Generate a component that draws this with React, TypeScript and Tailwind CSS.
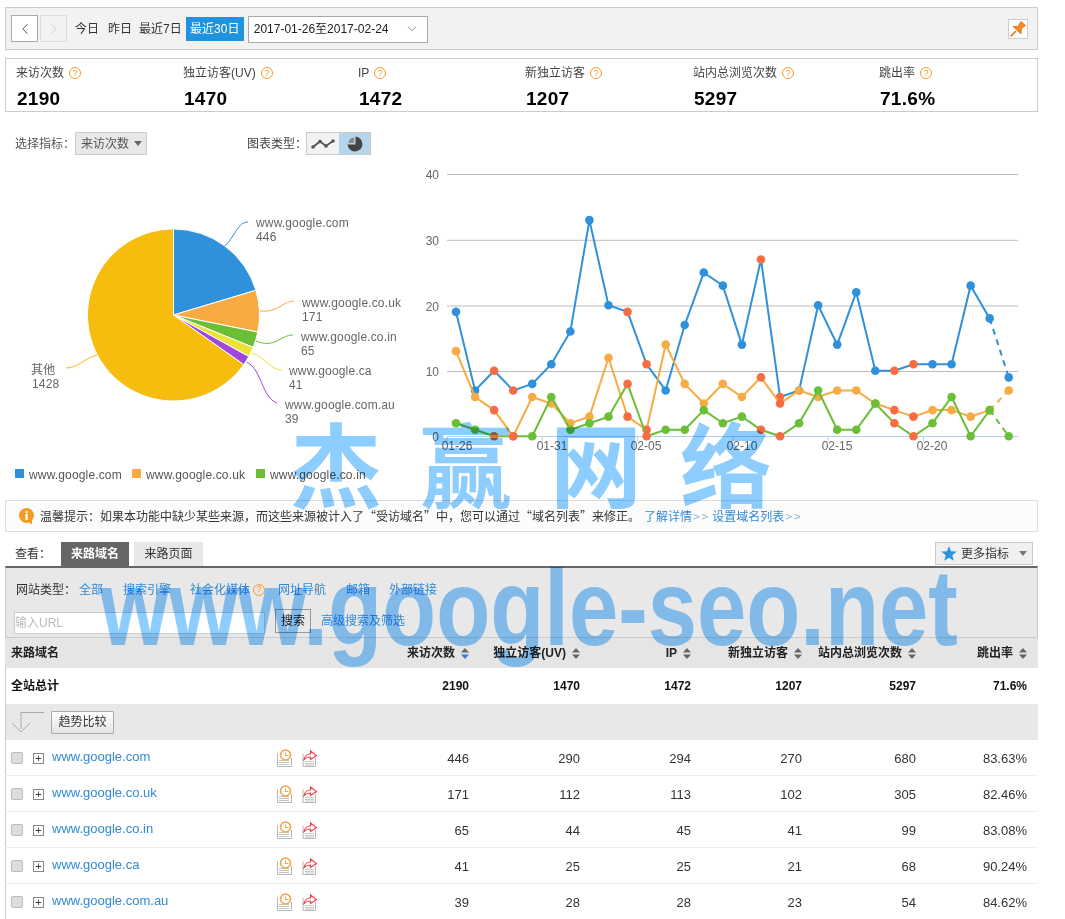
import React from "react";
import { ChevronLeft, ChevronRight, ChevronDown } from "lucide-react";

const Q = ({ small }: { small?: boolean }) => (
  <span className={`inline-flex items-center justify-center rounded-full border border-[#f59d2a] text-[#f59d2a] w-[12px] h-[12px] text-[9px] leading-none ${small ? "" : "ml-[5px]"}`}>?</span>
);

const stats = [
  { w: "w-[167px]", l: "来访次数", v: "2190" },
  { w: "w-[175px]", l: "独立访客(UV)", v: "1470" },
  { w: "w-[167px]", l: "IP", v: "1472" },
  { w: "w-[168px]", l: "新独立访客", v: "1207" },
  { w: "w-[186px]", l: "站内总浏览次数", v: "5297" },
  { w: "w-[150px]", l: "跳出率", v: "71.6%" },
];

const pieData = [
  { v: 446, c: "#2f91dc" },
  { v: 171, c: "#f7ab42" },
  { v: 65, c: "#6abf37" },
  { v: 41, c: "#ebe337" },
  { v: 39, c: "#9f47dc" },
  { v: 1428, c: "#f6bd0f" },
];
const total = 2190;
function pieSlices() {
  const cx = 173.5, cy = 315, r = 86;
  let a = -Math.PI / 2;
  return pieData.map((d) => {
    const b = a + (d.v / total) * Math.PI * 2;
    const p = `M${cx} ${cy}L${cx + r * Math.cos(a)} ${cy + r * Math.sin(a)}A${r} ${r} 0 ${b - a > Math.PI ? 1 : 0} 1 ${cx + r * Math.cos(b)} ${cy + r * Math.sin(b)}Z`;
    a = b;
    return <path key={d.c} d={p} fill={d.c} stroke="#fff" strokeWidth={1} />;
  });
}

const labels = [
  { x: 256, y: 227, a: "www.google.com", b: "446" },
  { x: 302, y: 307, a: "www.google.co.uk", b: "171" },
  { x: 301, y: 341, a: "www.google.co.in", b: "65" },
  { x: 289, y: 375, a: "www.google.ca", b: "41" },
  { x: 285, y: 409, a: "www.google.com.au", b: "39" },
];

const PieChart = () => (
  <svg width={420} height={345} viewBox="0 155 420 345" className="block shrink-0">
    {pieSlices()}
    <g fill="none" strokeWidth={1}>
      <path d="M225 246C235 236 238 222 248 222" stroke="#2f91dc" />
      <path d="M260 311C278 313 283 301 294 301" stroke="#f7ab42" />
      <path d="M256 341C275 349 280 335 293 335" stroke="#6abf37" />
      <path d="M252 353C265 357 270 370 282 370" stroke="#ebe337" />
      <path d="M247 362C262 370 262 398 277 403" stroke="#9f47dc" />
      <path d="M97 355C85 358 78 368 66 368" stroke="#f6bd0f" />
    </g>
    <g fontSize={12} fill="#666" letterSpacing={0.15}>
      {labels.map((l) => (
        <g key={l.a}>
          <text x={l.x} y={l.y}>{l.a}</text>
          <text x={l.x} y={l.y + 14}>{l.b}</text>
        </g>
      ))}
      <text x={31} y={374}>其他</text>
      <text x={32} y={388}>1428</text>
    </g>
    <g fontSize={12} fill="#555" letterSpacing={0.15}>
      <rect x={15} y={469} width={9} height={9} fill="#2f91dc" />
      <text x={29} y={479}>www.google.com</text>
      <rect x={132} y={469} width={9} height={9} fill="#f7ab42" />
      <text x={146} y={479}>www.google.co.uk</text>
      <rect x={256} y={469} width={9} height={9} fill="#6abf37" />
      <text x={270} y={479}>www.google.co.in</text>
    </g>
  </svg>
);

const blue = [19, 7, 10, 7, 8, 11, 16, 33, 20, 19, 11, 7, 17, 25, 23, 14, 27, 6, 7, 20, 14, 22, 10, 10, 11, 11, 11, 23, 18, 9];
const orange = [13, 6, 4, 0, 6, 5, 2, 3, 12, 3, 1, 14, 8, 5, 8, 6, 9, 5, 7, 6, 7, 7, 5, 4, 3, 4, 4, 3, 4, 7];
const green = [2, 1, 0, 0, 0, 6, 1, 2, 3, 8, 0, 1, 1, 4, 2, 3, 1, 0, 2, 7, 1, 1, 5, 2, 0, 2, 6, 0, 4, 0];
const weekend = [2, 3, 9, 10, 16, 17, 23, 24];
const px = (i: number) => 456 + i * 19.06;
const py = (v: number) => 436.3 - v * 6.55;

const Series = ({ d, c }: { d: number[]; c: string }) => (
  <g>
    <polyline points={d.slice(0, 29).map((v, i) => `${px(i)},${py(v)}`).join(" ")} fill="none" stroke={c} strokeWidth={2} />
    <line x1={px(28)} y1={py(d[28])} x2={px(29)} y2={py(d[29])} stroke={c} strokeWidth={2} strokeDasharray="6 5" />
    {d.map((v, i) => (
      <circle key={i} cx={px(i)} cy={py(v)} r={4.3} fill={weekend.includes(i) ? "#f96b40" : c} />
    ))}
  </g>
);

const LineChart = () => (
  <svg width={620} height={345} viewBox="420 155 620 345" className="block shrink-0">
    {[174.5, 240.3, 306, 371.5].map((y) => (
      <line key={y} x1={447} x2={1018} y1={y} y2={y} stroke="#bdbdbd" strokeWidth={1} />
    ))}
    <line x1={447} x2={1018} y1={436.5} y2={436.5} stroke="#b8d0e6" strokeWidth={1} />
    {[0, 5, 10, 15, 20, 25].map((i) => (
      <line key={i} x1={447 + i * 19.06} x2={447 + i * 19.06} y1={436} y2={441} stroke="#b8d0e6" strokeWidth={1} />
    ))}
    <g fontSize={12} fill="#666">
      {[["40", 179], ["30", 245], ["20", 311], ["10", 376], ["0", 441]].map(([t, y]) => (
        <text key={t} x={439} y={Number(y)} textAnchor="end">{t}</text>
      ))}
      {[["01-26", 457], ["01-31", 552], ["02-05", 646], ["02-10", 742], ["02-15", 837], ["02-20", 932]].map(([t, x]) => (
        <text key={t} x={Number(x)} y={450} textAnchor="middle">{t}</text>
      ))}
    </g>
    <Series d={blue} c="#2f91dc" />
    <Series d={orange} c="#f7ab42" />
    <Series d={green} c="#6abf37" />
  </svg>
);

const SortIcon = ({ active }: { active?: boolean }) => (
  <svg width={8} height={11} viewBox="0 0 8 11" className="ml-[6px] shrink-0">
    <path d="M4 0L8 4.5H0Z" fill="#666" />
    <path d="M4 11L8 6.5H0Z" fill={active ? "#2f7fe0" : "#666"} />
  </svg>
);

const ClockDoc = () => (
  <svg width={17} height={18} viewBox="0 0 17 18" className="shrink-0">
    <path d="M1.5 4.5V17.5H15.5V9" fill="#fff" stroke="#b5b5b5" />
    <path d="M3 11.5H13M3 13.5H13M3 15.5H13" stroke="#c5c5c5" />
    <circle cx={9.5} cy={6} r={5} fill="#fff" stroke="#f5a23c" strokeWidth={1.5} />
    <path d="M9.5 3.5V6.5H12.5" fill="none" stroke="#f5a23c" />
  </svg>
);
const ShareDoc = () => (
  <svg width={15} height={18} viewBox="0 0 15 18" className="shrink-0">
    <path d="M1 4.5V17.5H13.5V9" fill="#fff" stroke="#b5b5b5" />
    <path d="M3 12.5H12M3 14.5H12M3 16H12" stroke="#c5c5c5" />
    <path d="M2 10.5C2.5 7 5.5 5 8.5 5V2L14.5 6.5L8.5 10.5V8C6 8 3.5 9 2 10.5Z" fill="#fff" stroke="#f0444c" strokeWidth={1.2} />
  </svg>
);

const rows = [
  ["www.google.com", "446", "290", "294", "270", "680", "83.63%"],
  ["www.google.co.uk", "171", "112", "113", "102", "305", "82.46%"],
  ["www.google.co.in", "65", "44", "45", "41", "99", "83.08%"],
  ["www.google.ca", "41", "25", "25", "21", "68", "90.24%"],
  ["www.google.com.au", "39", "28", "28", "23", "54", "84.62%"],
];
const heads = ["来访次数", "独立访客(UV)", "IP", "新独立访客", "站内总浏览次数", "跳出率"];
const totals = ["2190", "1470", "1472", "1207", "5297", "71.6%"];
const grid = "grid grid-cols-[350px_114px_111px_111px_111px_114px_111px]";

export default function App() {
  return (
    <div className="relative w-[1065px] h-[919px] overflow-hidden bg-white pt-[7px] text-[12px] text-[#333] [font-family:'Liberation_Sans','Noto_Sans_CJK_SC',sans-serif]">
      {/* Date bar */}
      <div className="ml-[5px] w-[1033px] h-[43px] border border-[#ccc] bg-[#f2f2f2] flex items-center">
        <button className="ml-[5px] w-[27px] h-[27px] border border-[#aaa] bg-white flex items-center justify-center text-[#444]">
          <ChevronLeft size={18} strokeWidth={1.2} />
        </button>
        <button className="ml-[2px] w-[27px] h-[27px] border border-[#ddd] bg-[#f2f2f2] flex items-center justify-center text-[#ccc]">
          <ChevronRight size={18} strokeWidth={1.2} />
        </button>
        <span className="ml-[8px]">今日</span>
        <span className="ml-[9px]">昨日</span>
        <span className="ml-[7px]">最近7日</span>
        <span className="ml-[4px] w-[58px] h-[24px] bg-[#1f93dd] text-white flex items-center justify-center">最近30日</span>
        <div className="ml-[4px] mt-[1px] w-[180px] h-[27px] border border-[#aaa] bg-white flex items-center pl-[5px] text-[#222]">
          2017-01-26至2017-02-24
          <ChevronDown size={14} strokeWidth={1.2} className="ml-[16px] text-[#555]" />
        </div>
        <div className="ml-auto mr-[9px] w-[20px] h-[20px] border border-[#ccc] bg-white flex items-center justify-center">
          <svg width={18} height={18} viewBox="0 0 18 18">
            <path d="M1.5 16.5L7 11" stroke="#e8660f" strokeWidth={1.4} />
            <path d="M4 6.5L9 6.5L12 1.5L16.5 5.5L12.5 8.5L12 14Z" fill="#f58a1f" stroke="#d9600c" strokeWidth={0.7} />
          </svg>
        </div>
      </div>

      {/* Stats */}
      <div className="mt-[8px] ml-[5px] w-[1033px] h-[54px] border border-[#ccc] flex pl-[10px] pt-[6px]">
        {stats.map((s) => (
          <div key={s.l} className={`${s.w} shrink-0`}>
            <div className="h-[16px] flex items-center text-[#444]">
              {s.l}
              <Q />
            </div>
            <div className="mt-[7px] pl-[1px] text-[19px] leading-[22px] tracking-[0.3px] font-bold text-black">{s.v}</div>
          </div>
        ))}
      </div>

      {/* Selectors */}
      <div className="mt-[20px] h-[23px] flex items-center text-[#555]">
        <span className="ml-[15px] w-[60px] whitespace-nowrap">选择指标：</span>
        <div className="w-[72px] h-[23px] border border-[#ccc] bg-[#e8e8e8] flex items-center pl-[5px] text-[#555]">
          来访次数
          <svg width={8} height={5} viewBox="0 0 8 5" className="ml-[5px]"><path d="M0 0H8L4 5Z" fill="#666" /></svg>
        </div>
        <span className="ml-[100px] w-[59px] whitespace-nowrap text-[#444]">图表类型：</span>
        <div className="w-[65px] h-[23px] border border-[#ccc] flex">
          <div className="w-[32px] bg-[#f2f2f2] flex items-center justify-center">
            <svg width={24} height={12} viewBox="0 0 24 12">
              <path d="M2 9L9 3.5L15 8L22 3" fill="none" stroke="#555" strokeWidth={1.8} />
              <circle cx={2} cy={9} r={1.8} fill="#555" /><circle cx={9} cy={3.5} r={1.8} fill="#555" /><circle cx={15} cy={8} r={1.8} fill="#555" /><circle cx={22} cy={3} r={1.8} fill="#555" />
            </svg>
          </div>
          <div className="flex-1 bg-[#b5d5ec] flex items-center justify-center">
            <svg width={16} height={16} viewBox="0 0 16 16">
              <path d="M8.5 0.5A7.5 7.5 0 1 1 0.5 8.5H8.5Z" fill="#444" />
              <path d="M1.5 7A5.5 5.5 0 0 1 7 1.5V7Z" fill="#8a8a8a" />
            </svg>
          </div>
        </div>
      </div>

      {/* Charts */}
      <div className="flex h-[345px]">
        <PieChart />
        <LineChart />
      </div>

      {/* Notice */}
      <div className="ml-[5px] w-[1033px] h-[32px] border border-[#ddd] bg-[#fcfcfc] flex items-center pl-[12px] text-[#333] [font-family:'Noto_Sans_CJK_SC','Liberation_Sans',sans-serif]">
        <svg width={17} height={17} viewBox="0 0 17 17" className="shrink-0">
          <circle cx={8.5} cy={7.5} r={7.5} fill="#f59a23" />
          <path d="M9 13L14 12L14 16.5Z" fill="#f59a23" />
          <rect x={7.5} y={6} width={2.2} height={6} fill="#fff" />
          <rect x={7.5} y={3} width={2.2} height={2} fill="#fff" />
        </svg>
        <span className="ml-[5px] whitespace-nowrap">温馨提示：如果本功能中缺少某些来源，而这些来源被计入了“受访域名”中，您可以通过“域名列表”来修正。</span>
        <span className="ml-[4px] whitespace-nowrap text-[#2f8ad8]">了解详情<span className="ml-[1px] text-[#8ab4d8] tracking-[2px]">&gt;&gt;</span></span>
        <span className="ml-[2px] whitespace-nowrap text-[#2f8ad8]">设置域名列表<span className="ml-[1px] text-[#8ab4d8] tracking-[2px]">&gt;&gt;</span></span>
      </div>

      {/* Tabs */}
      <div className="mt-[10px] ml-[5px] w-[1033px] h-[24px] flex items-stretch">
        <span className="ml-[10px] w-[46px] flex items-center text-[#333]">查看：</span>
        <div className="w-[68px] bg-[#666] text-white font-bold flex items-center justify-center">来路域名</div>
        <div className="ml-[5px] w-[69px] bg-[#e8e8e8] text-[#333] flex items-center justify-center">来路页面</div>
        <div className="ml-auto mr-[5px] w-[98px] h-[23px] border border-[#ccc] bg-[#f0f0f0] flex items-center pl-[5px] text-[#333]">
          <svg width={16} height={15} viewBox="0 0 16 15"><path d="M8 0L10 5.3L15.8 5.6L11.3 9.2L12.8 14.8L8 11.7L3.2 14.8L4.7 9.2L0.2 5.6L6 5.3Z" fill="#2f93dc" /></svg>
          <span className="ml-[4px]">更多指标</span>
          <svg width={8} height={5} viewBox="0 0 8 5" className="ml-[10px]"><path d="M0 0H8L4 5Z" fill="#777" /></svg>
        </div>
      </div>

      {/* Filter */}
      <div className="ml-[5px] w-[1033px] h-[72px] border-t-[2px] border-t-[#666] border-x border-x-[#ccc] border-b border-b-[#ccc] bg-[#e8e8e8]">
        <div className="h-[41px] pt-[2px] flex items-center text-[#2f8ad8]">
          <span className="ml-[10px] w-[63px] text-[#333]">网站类型：</span>
          <span>全部</span>
          <span className="ml-[20px]">搜索引擎</span>
          <span className="ml-[19px]">社会化媒体</span>
          <span className="ml-[3px] inline-flex"><Q small /></span>
          <span className="ml-[13px]">网址导航</span>
          <span className="ml-[20px]">邮箱</span>
          <span className="ml-[19px]">外部链接</span>
        </div>
        <div className="flex items-center h-[24px]">
          <div className="ml-[8px] mt-[3px] w-[251px] h-[22px] border border-[#ccc] bg-white flex items-center text-[#bbb]">输入URL</div>
          <div className="ml-[10px] w-[36px] h-[24px] border border-[#999] bg-[#e8e8e8] text-[#222] flex items-center justify-center">搜索</div>
          <span className="ml-[10px] text-[#2f8ad8]">高级搜索及筛选</span>
        </div>
      </div>

      {/* Table */}
      <div className="ml-[5px] w-[1033px]">
        <div className={`${grid} h-[30px] bg-[#e5e5e5] items-center font-bold text-[#222]`}>
          <div className="pl-[6px]">来路域名</div>
          {heads.map((h, i) => (
            <div key={h} className="flex items-center justify-end whitespace-nowrap">
              {h}
              <SortIcon active={i === 0} />
            </div>
          ))}
        </div>
        <div className={`${grid} h-[36px] items-center font-bold text-[#111] shadow-[inset_1px_0_0_#ccc]`}>
          <div className="pl-[6px]">全站总计</div>
          {totals.map((t) => (
            <div key={t} className="text-right">{t}</div>
          ))}
        </div>
        <div className="h-[36px] bg-[#e8e8e8] flex items-center shadow-[inset_1px_0_0_#ccc]">
          <svg width={35} height={22} viewBox="0 0 35 22" className="ml-[5px] shrink-0">
            <path d="M34 1.5H11V18" fill="none" stroke="#aaa" />
            <path d="M2 12L11 21L20 12" fill="none" stroke="#aaa" />
          </svg>
          <div className="ml-[6px] w-[63px] h-[23px] border border-[#aaa] bg-[linear-gradient(#fff,#e4e4e4)] text-[#333] flex items-center justify-center rounded-[1px]">趋势比较</div>
        </div>
        {rows.map((r) => (
          <div key={r[0]} className={`${grid} h-[36px] items-center border-b border-b-[#eee] shadow-[inset_1px_0_0_#ccc] text-[13px] text-[#333]`}>
            <div className="flex items-center">
              <span className="ml-[6px] w-[12px] h-[12px] rounded-[2px] border border-[#bbb] bg-[#ddd] shrink-0" />
              <span className="ml-[10px] w-[11px] h-[11px] border border-[#888] flex items-center justify-center text-[11px] leading-none text-[#333] shrink-0 mt-[2px]">+</span>
              <span className="ml-[8px] w-[224px] text-[#2f8ad8] mb-[1px]">{r[0]}</span>
              <ClockDoc />
              <span className="ml-[9px] inline-flex"><ShareDoc /></span>
            </div>
            {r.slice(1).map((v, i) => (
              <div key={i} className="text-right mt-[2px]">{v}</div>
            ))}
          </div>
        ))}
      </div>

      {/* Watermark */}
      <div className="absolute left-0 top-0 w-[1065px] h-[919px] pointer-events-none mix-blend-multiply text-[#8ecdff]">
        <div className="absolute left-[290px] top-[396px] flex gap-[38px] text-[92px] leading-[130px] font-bold [font-family:'Noto_Sans_CJK_SC',sans-serif]">
          <span>杰</span><span>赢</span><span>网</span><span>络</span>
        </div>
        <div className="absolute left-[100px] top-[543px] origin-left scale-x-[0.82] text-[108px] leading-[130px] font-bold whitespace-nowrap [font-family:'Liberation_Sans',sans-serif]">www.google-seo.net</div>
      </div>
    </div>
  );
}
